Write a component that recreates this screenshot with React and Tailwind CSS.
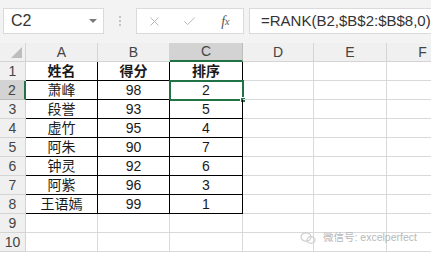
import { X, Check } from 'lucide-react';

const COLS = [
  { key: 'A', w: 72 },
  { key: 'B', w: 72 },
  { key: 'C', w: 73 },
  { key: 'D', w: 71 },
  { key: 'E', w: 73 },
  { key: 'F', w: 72 },
];

const DATA = [
  ['姓名', '得分', '排序'],
  ['萧峰', '98', '2'],
  ['段誉', '93', '5'],
  ['虚竹', '95', '4'],
  ['阿朱', '90', '7'],
  ['钟灵', '92', '6'],
  ['阿紫', '96', '3'],
  ['王语嫣', '99', '1'],
];

const FONT = { fontFamily: '"Liberation Sans", "Noto Sans CJK SC", sans-serif' };

function Cell({ row, colIdx, w }) {
  const inTable = row <= 8 && colIdx < 3;
  const value = inTable ? DATA[row - 1][colIdx] : '';
  const bold = row === 1;
  const selected = row === 2 && colIdx === 2;
  return (
    <div
      className={`relative h-[19px] shrink-0 flex items-center justify-center text-[14px] leading-none text-[#1a1a1a] ${
        inTable ? 'border-r border-b border-black' : 'border-r border-b border-[#d9d9d9]'
      } ${bold ? 'font-bold' : ''}`}
      style={{ width: w }}
    >
      {value}
      {selected && (
        <div className="absolute -left-[1px] -top-[1px] right-[-2px] bottom-[-2px] border-2 border-[#217346]">
          <div className="absolute -right-[4px] -bottom-[4px] w-[6px] h-[6px] bg-[#217346] border border-white" />
        </div>
      )}
    </div>
  );
}

export default function App() {
  return (
    <div className="w-[431px] h-[255px] overflow-hidden bg-white relative" style={FONT}>
      {/* formula bar */}
      <div className="h-[43px] bg-[#f3f3f3] flex items-start pt-[8px] pl-[3px]">
        <div className="w-[101px] h-[26px] bg-white border border-[#dadada] flex items-center pl-[7px] pr-[6px]">
          <span className="text-[16px] text-[#333] flex-1">C2</span>
          <span className="w-0 h-0 border-l-[4px] border-r-[4px] border-t-[4px] border-l-transparent border-r-transparent border-t-[#7a7a7a]" />
        </div>
        <div className="w-[32px] h-[26px] flex flex-col items-center justify-center gap-[2px]">
          <span className="w-[2px] h-[2px] bg-[#c4c4c4]" />
          <span className="w-[2px] h-[2px] bg-[#c4c4c4]" />
          <span className="w-[2px] h-[2px] bg-[#c4c4c4]" />
        </div>
        <div className="w-[108px] h-[26px] bg-white border border-[#dadada] flex items-center">
          <div className="w-[36px] flex justify-center">
            <X size={15} strokeWidth={1.5} className="text-[#b4b4b4]" />
          </div>
          <div className="w-[36px] flex justify-center">
            <Check size={15} strokeWidth={1.5} className="text-[#b4b4b4]" />
          </div>
          <div className="w-[36px] flex justify-center text-[14px] italic text-[#555]" style={{ fontFamily: '"Liberation Serif", serif' }}>
            f<span className="text-[10px] mt-[3px]">x</span>
          </div>
        </div>
        <div className="ml-[5px] flex-1 h-[26px] bg-white border border-[#dadada] border-r-0 flex items-center pl-[11px] text-[15px] text-[#333]">
          =RANK(B2,$B$2:$B$8,0)
        </div>
      </div>

      {/* header row */}
      <div className="flex h-[19px] bg-[#f0f0f0]">
        <div className="w-[26px] shrink-0 relative border-r border-b border-[#d4d4d4]">
          <div className="absolute right-[3px] bottom-[3px] w-0 h-0 border-b-[11px] border-l-[11px] border-b-[#bdbdbd] border-l-transparent" />
        </div>
        {COLS.map((c) => (
          <div
            key={c.key}
            className={`shrink-0 flex items-center justify-center text-[14px] text-[#444] border-r ${
              c.key === 'C'
                ? 'bg-[#d3d3d3] border-b-2 border-b-[#217346] border-r-[#bdbdbd]'
                : 'border-b border-[#d4d4d4]'
            }`}
            style={{ width: c.w }}
          >
            {c.key}
          </div>
        ))}
      </div>

      {/* rows */}
      {Array.from({ length: 10 }, (_, i) => i + 1).map((row) => (
        <div key={row} className="flex">
          <div
            className={`w-[26px] h-[19px] shrink-0 flex items-center justify-center text-[14px] text-[#444] border-b ${
              row === 2
                ? 'bg-[#d3d3d3] border-r-2 border-r-[#217346] border-b-[#bdbdbd]'
                : 'bg-[#f0f0f0] border-r border-[#d4d4d4]'
            }`}
          >
            {row}
          </div>
          {COLS.map((c, ci) => (
            <Cell key={c.key} row={row} colIdx={ci} w={c.w} />
          ))}
        </div>
      ))}

      {/* watermark */}
      <div className="absolute left-[300px] top-[230px] flex items-center gap-[7px] text-[10.5px] text-[#b8b8b8]">
        <svg width="16" height="14" viewBox="0 0 16 14" fill="none" stroke="#cfcfcf" strokeWidth="1.2">
          <ellipse cx="6" cy="6" rx="5" ry="4.2" />
          <ellipse cx="11" cy="9" rx="4" ry="3.4" />
        </svg>
        <span>微信号: excelperfect</span>
      </div>
    </div>
  );
}
